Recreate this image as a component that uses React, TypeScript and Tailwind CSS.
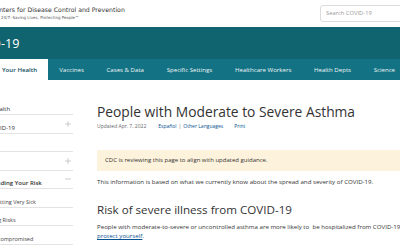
import React from 'react';

const navItems = ['Vaccines', 'Cases & Data', 'Specific Settings', 'Healthcare Workers', 'Health Depts', 'Science'];

type Row = { label: string; offset: string; sub?: boolean; bold?: boolean; icon?: 'plus' | 'minus' };

const sideRows: Row[] = [
  { label: 'Your Health', offset: '-ml-[23px]' },
  { label: 'COVID-19', offset: '-ml-[12px]', icon: 'plus' },
  { label: 'Testing', offset: '-ml-[40px]' },
  { label: 'Prevention', offset: '-ml-[50px]', icon: 'plus' },
  { label: 'Understanding Your Risk', offset: '-ml-[30px]', bold: true, icon: 'minus' },
  { label: 'Getting Very Sick', offset: '-ml-[7px]', sub: true },
  { label: 'Managing Risks', offset: '-ml-[24px]', sub: true },
  { label: 'Immunocompromised', offset: '-ml-[24px]', sub: true },
];

function Toggle({ kind }: { kind?: 'plus' | 'minus' }) {
  if (!kind) return <span className="w-[6px] mr-[2px]" />;
  return (
    <svg className="w-[6px] h-[6px] mr-[2px]" viewBox="0 0 6 6" fill="none" stroke="#b8b8b8" strokeWidth="0.7">
      <line x1="0" y1="3" x2="6" y2="3" />
      {kind === 'plus' && <line x1="3" y1="0" x2="3" y2="6" />}
    </svg>
  );
}

function SideRow({ row }: { row: Row }) {
  return (
    <div className="h-[18.5px] flex items-center border-b border-[#e3e3e3]">
      <div className="flex-1 min-w-0 overflow-hidden whitespace-nowrap">
        <span
          className={`inline-block ${row.offset} ${row.sub ? 'text-[5.5px] text-[#444]' : 'text-[6px] text-[#333]'} ${
            row.bold ? 'font-semibold' : ''
          }`}
        >
          {row.label}
        </span>
      </div>
      <Toggle kind={row.icon} />
    </div>
  );
}

export default function App() {
  return (
    <div className="w-[400px] h-[250px] overflow-hidden bg-white font-['Open_Sans',sans-serif] text-[#333]">
      {/* site header */}
      <header className="h-[27px] flex items-center">
        <div className="-ml-[9px] flex flex-col leading-none font-['DejaVu_Sans',sans-serif] whitespace-nowrap">
          <span className="text-[6.2px] text-[#333]">Centers for Disease Control and Prevention</span>
          <span className="mt-[2.5px] text-[4px] text-[#555]">CDC 24/7: Saving Lives, Protecting People™</span>
        </div>
        <div className="ml-auto -mr-[6px] w-[86px] h-[17px] border border-[#dcdcdc] rounded-[3px] flex items-center pl-[5px] text-[5.8px] text-[#999]">
          Search COVID-19
        </div>
      </header>

      {/* topic band */}
      <div className="h-[32px] bg-[#10646f] flex items-center pt-[3px]">
        <span className="-ml-[37px] text-white text-[12.6px]">COVID-19</span>
      </div>

      <nav className="h-[21px] bg-[#137384] flex items-stretch text-[6.1px] whitespace-nowrap">
        <div className="-ml-[9px] bg-white px-[11px] flex items-center font-semibold text-[#0e4d5c]">Your Health</div>
        {navItems.map((item) => (
          <div key={item} className="px-[11.35px] flex items-center text-[#eef5f6]">
            {item}
          </div>
        ))}
      </nav>

      <div className="flex">
        <aside className="w-[73px] shrink-0 pt-[16.5px]">
          {sideRows.map((r) => (
            <SideRow key={r.label} row={r} />
          ))}
        </aside>

        <main className="ml-[24px] w-[330px] shrink-0 pt-[23px]">
          <h1 className="text-[13.8px] leading-[18px] text-[#333] whitespace-nowrap">People with Moderate to Severe Asthma</h1>
          <div className="mt-[2px] flex items-center text-[5px] leading-[7px] whitespace-nowrap">
            <span className="text-[#666]">Updated Apr. 7, 2022</span>
            <span className="ml-[12px] text-[#075290]">Español</span>
            <span className="mx-[2px] text-[#666]">|</span>
            <span className="text-[#075290]">Other Languages</span>
            <span className="ml-[11px] text-[#075290]">Print</span>
          </div>

          <div className="mt-[20px] h-[21px] bg-[#fdf2db] flex items-center pl-[8px] text-[6px] text-[#333]">
            CDC is reviewing this page to align with updated guidance.
          </div>

          <p className="mt-[7px] text-[6.15px] leading-[8px] whitespace-nowrap">
            This information is based on what we currently know about the spread and severity of COVID-19.
          </p>

          <h2 className="mt-[16px] text-[11.6px] leading-[15px] text-[#333] whitespace-nowrap">
            Risk of severe illness from COVID-19
          </h2>
          <p className="mt-[5px] text-[6.15px] leading-[9px] whitespace-nowrap">
            People with moderate-to-severe or uncontrolled asthma are more likely to&nbsp; be hospitalized from COVID-19. Learn how to
            <br />
            <a className="text-[#075290] underline">protect yourself</a>.
          </p>
        </main>
      </div>
    </div>
  );
}
